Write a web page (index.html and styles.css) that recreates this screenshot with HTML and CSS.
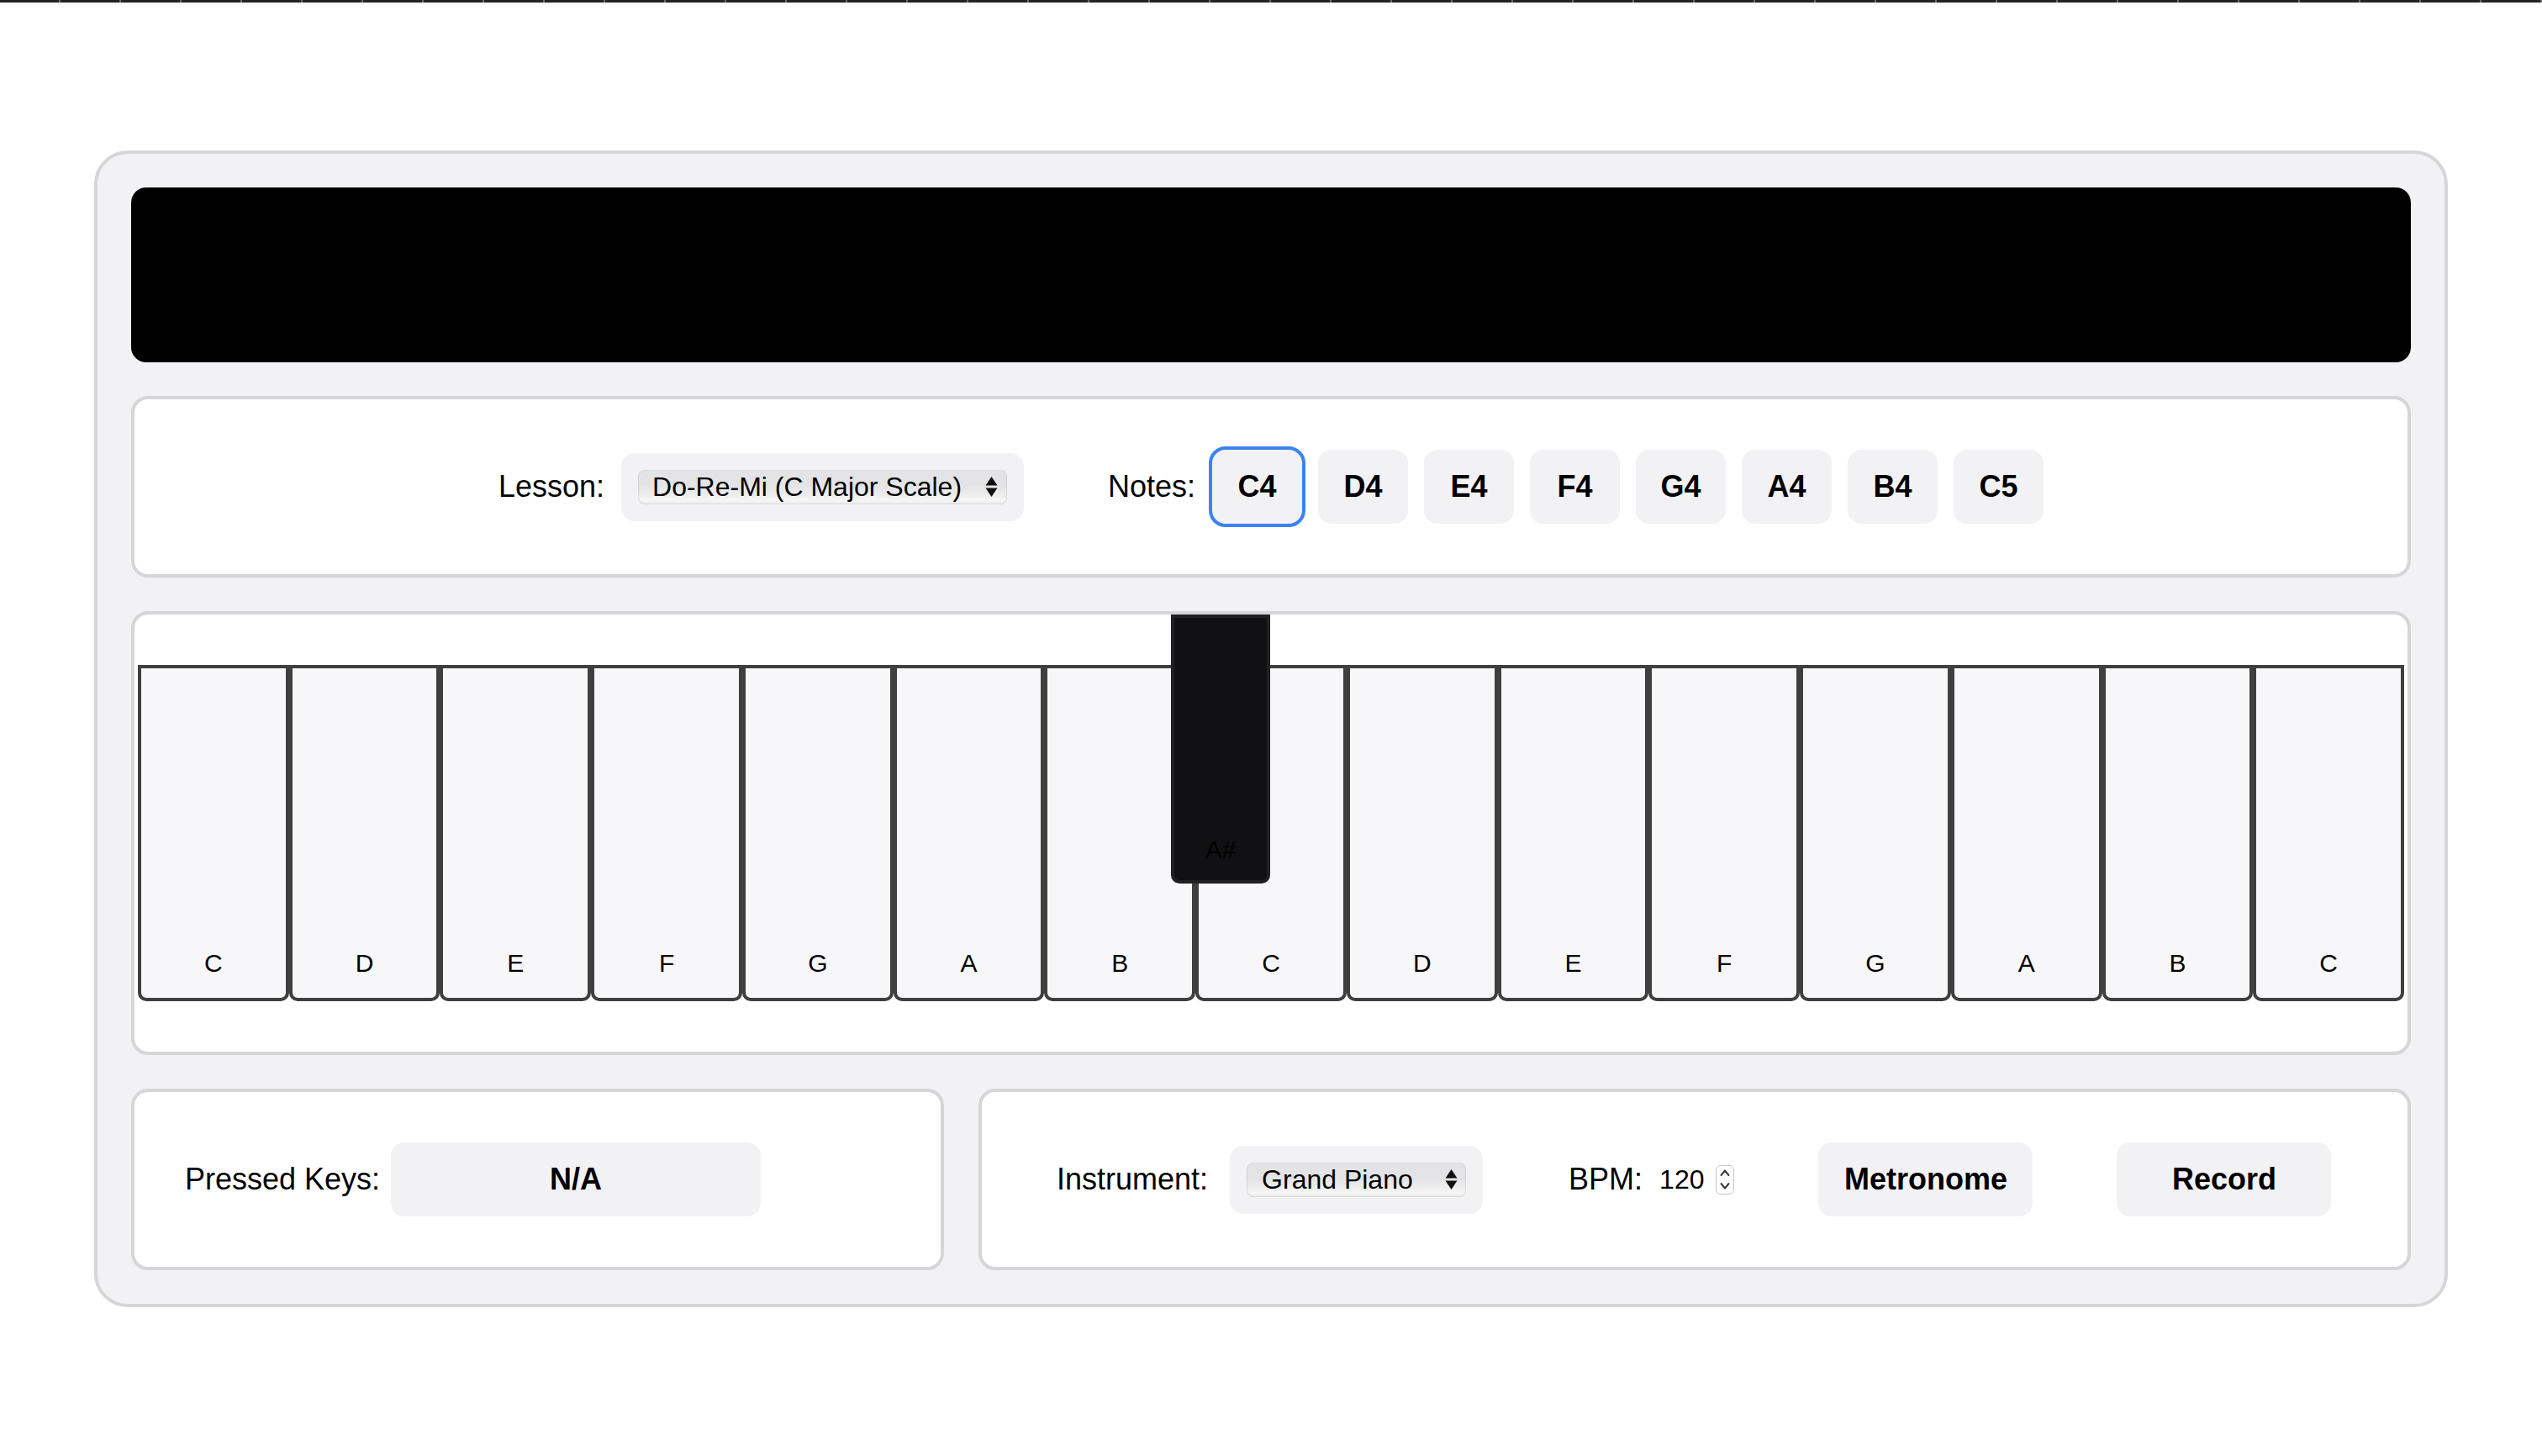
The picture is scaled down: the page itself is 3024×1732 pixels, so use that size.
FILE: index.html
```html
<!DOCTYPE html>
<html lang="en">
<head>
<meta charset="utf-8">
<title>Piano Lessons</title>
<link rel="stylesheet" href="styles.css">
</head>
<body>
<div class="strip"></div>
<main class="app">
  <div class="display"></div>

  <section class="panel lesson-panel">
    <div class="field">
      <span class="label">Lesson:</span>
      <div class="select-wrap">
        <div class="select select-lesson">
          <span>Do-Re-Mi (C Major Scale)</span>
          <svg class="arrows" width="15" height="26" viewBox="0 0 15 26"><polygon points="7.5,1 14.5,11.5 0.5,11.5" fill="#111"/><polygon points="0.5,14.5 14.5,14.5 7.5,25" fill="#111"/></svg>
        </div>
      </div>
    </div>
    <div class="field">
      <span class="label">Notes:</span>
      <div class="notes">
        <button class="note active">C4</button>
        <button class="note">D4</button>
        <button class="note">E4</button>
        <button class="note">F4</button>
        <button class="note">G4</button>
        <button class="note">A4</button>
        <button class="note">B4</button>
        <button class="note">C5</button>
      </div>
    </div>
  </section>

  <section class="panel piano-panel">
    <div class="keys">
      <div class="white-key"><span>C</span></div>
      <div class="white-key"><span>D</span></div>
      <div class="white-key"><span>E</span></div>
      <div class="white-key"><span>F</span></div>
      <div class="white-key"><span>G</span></div>
      <div class="white-key"><span>A</span></div>
      <div class="white-key"><span>B</span></div>
      <div class="white-key"><span>C</span></div>
      <div class="white-key"><span>D</span></div>
      <div class="white-key"><span>E</span></div>
      <div class="white-key"><span>F</span></div>
      <div class="white-key"><span>G</span></div>
      <div class="white-key"><span>A</span></div>
      <div class="white-key"><span>B</span></div>
      <div class="white-key"><span>C</span></div>
    </div>
    <div class="black-key"><span>A#</span></div>
  </section>

  <div class="bottom-row">
    <section class="panel pressed-panel">
      <span class="label">Pressed Keys:</span>
      <div class="pressed-value">N/A</div>
    </section>
    <section class="panel controls-panel">
      <div class="field instrument-field">
        <span class="label">Instrument:</span>
        <div class="select-wrap">
          <div class="select select-instrument">
            <span>Grand Piano</span>
            <svg class="arrows" width="15" height="26" viewBox="0 0 15 26"><polygon points="7.5,1 14.5,11.5 0.5,11.5" fill="#111"/><polygon points="0.5,14.5 14.5,14.5 7.5,25" fill="#111"/></svg>
          </div>
        </div>
      </div>
      <div class="field bpm-field">
        <span class="label">BPM:</span>
        <span class="bpm-value">120</span>
        <span class="spinner">
          <svg width="16" height="32" viewBox="0 0 16 32"><polyline points="3.5,11 8,5.5 12.5,11" fill="none" stroke="#3a3a3a" stroke-width="2" stroke-linecap="round" stroke-linejoin="round"/><polyline points="3.5,21 8,26.5 12.5,21" fill="none" stroke="#3a3a3a" stroke-width="2" stroke-linecap="round" stroke-linejoin="round"/></svg>
        </span>
      </div>
      <button class="btn metronome">Metronome</button>
      <button class="btn record">Record</button>
    </section>
  </div>
</main>
</body>
</html>
```

FILE: styles.css
```css
* { box-sizing: border-box; }

html, body {
  margin: 0;
  padding: 0;
  background: #ffffff;
}

body {
  font-family: "Liberation Sans", Arial, Helvetica, sans-serif;
  color: #000;
  width: 3024px;
}

.strip {
  height: 3px;
  background: repeating-linear-gradient(90deg, #232323 0, #232323 70px, #6a6a6a 70px, #6a6a6a 72px);
}

.app {
  width: 2800px;
  margin: 176px auto 0;
  border: 4px solid #d6d6d8;
  border-radius: 40px;
  background: #f2f2f4;
  padding: 40px;
  display: flex;
  flex-direction: column;
  gap: 40px;
}

.display {
  height: 208px;
  background: #000;
  border-radius: 18px;
}

.panel {
  background: #fff;
  border: 4px solid #d6d6d8;
  border-radius: 20px;
  height: 216px;
}

.label {
  font-size: 36px;
  white-space: nowrap;
}

.field {
  display: flex;
  align-items: center;
  gap: 20px;
}

/* lesson */
.lesson-panel {
  display: flex;
  align-items: center;
  justify-content: center;
  gap: 100px;
}

.select-wrap {
  background: #f2f2f4;
  border-radius: 16px;
  padding: 20px;
}

.select {
  height: 41px;
  border-radius: 8px;
  background: linear-gradient(180deg, #e3e3e5 0%, #e4e4e6 45%, #ececed 70%, #f6f6f6 88%, #e9e9ea 100%);
  box-shadow: inset 1px 0 1px rgba(0,0,0,0.08), inset -1px 0 1px rgba(0,0,0,0.08), inset 0 -1px 1px rgba(0,0,0,0.06);
  display: flex;
  align-items: center;
  justify-content: space-between;
  font-size: 32px;
  padding: 0 11px 0 17px;
  white-space: nowrap;
}

.select-lesson { width: 439px; }
.select-instrument { width: 261px; padding-left: 18px; padding-right: 10px; }

.arrows { display: block; }

.notes {
  display: flex;
  gap: 19px;
}

.note, .btn {
  font-family: "Liberation Sans", Arial, Helvetica, sans-serif;
  font-weight: 700;
  font-size: 36px;
  color: #000;
  background: #f2f2f4;
  border: 0;
  border-radius: 16px;
  height: 88px;
  padding: 0;
  margin: 0;
}

.note { width: 107px; }

.note.active {
  outline: 4px solid #3b82f6;
  outline-offset: 0;
}

/* piano */
.piano-panel {
  position: relative;
  height: 528px;
  padding: 60px 4px;
}

.keys {
  display: flex;
  height: 400px;
}

.white-key {
  flex: 1;
  background: #f7f7f9;
  border: 4px solid #3f3f3f;
  border-radius: 0 0 10px 10px;
  display: flex;
  align-items: flex-end;
  justify-content: center;
  padding-bottom: 26px;
  font-size: 30px;
  line-height: 30px;
}

.black-key {
  position: absolute;
  top: 0;
  left: 1233px;
  width: 118px;
  height: 320px;
  background: #111113;
  border: 4px solid #202023;
  border-radius: 0 0 10px 10px;
  display: flex;
  align-items: flex-end;
  justify-content: center;
  padding-bottom: 21px;
  font-size: 30px;
  line-height: 30px;
  color: #000;
}

/* bottom */
.bottom-row {
  display: flex;
  gap: 41px;
}

.pressed-panel {
  width: 967px;
  flex: 0 0 967px;
  display: flex;
  align-items: center;
  padding-left: 60px;
  gap: 13px;
}

.pressed-value {
  width: 440px;
  height: 88px;
  background: #f2f2f4;
  border-radius: 16px;
  display: flex;
  align-items: center;
  justify-content: center;
  font-weight: 700;
  font-size: 36px;
}

.controls-panel {
  flex: 1;
  display: flex;
  align-items: center;
  padding-left: 89px;
}

.instrument-field { gap: 26px; }
.bpm-field { margin-left: 102px; }
.metronome { margin-left: 100px; }
.record { margin-left: 100px; }

.bpm-value {
  font-size: 32px;
}

.spinner {
  width: 22px;
  height: 35px;
  margin-left: -6px;
  border: 1px solid #c8c8ca;
  border-radius: 6px;
  display: flex;
  align-items: center;
  justify-content: center;
}

.spinner svg { display: block; }

.btn { width: 255px; }
```
